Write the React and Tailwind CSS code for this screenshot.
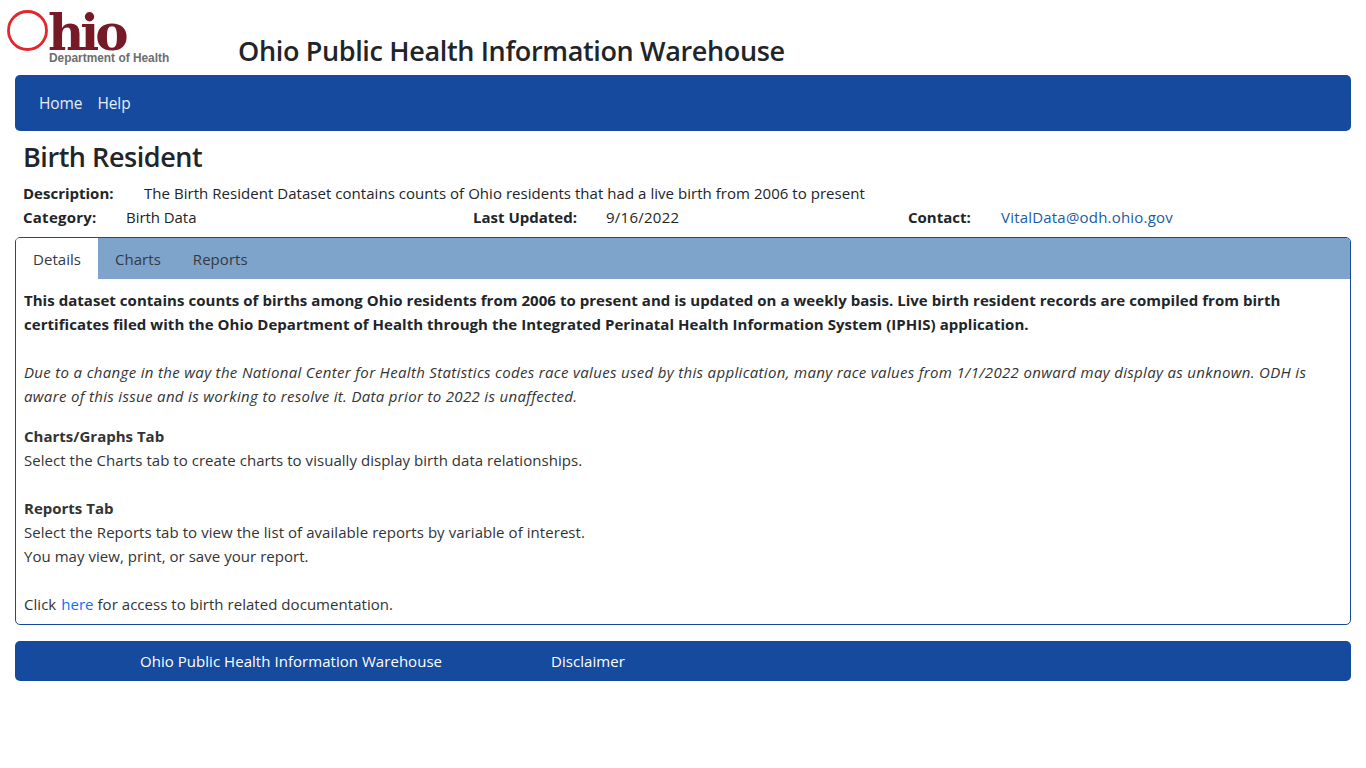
export default function App() {
  return (
    <div className="font-['Open_Sans','Noto_Sans',sans-serif] text-[15px] leading-6 tracking-[0.04px] text-[#212529] bg-white min-h-[768px]">
      <header className="h-[75px] flex items-start">
        <div className="w-[238px] shrink-0 h-[75px] pl-[7px] pt-[10px]">
          <div className="flex items-start h-[41px]">
            <svg width="41" height="41" viewBox="0 0 41 41" className="shrink-0">
              <circle cx="20.5" cy="20.5" r="19" fill="none" stroke="#e0282e" strokeWidth="2.8" />
            </svg>
            <span className="font-['DejaVu_Serif',serif] font-bold text-[50px] leading-[45px] tracking-[-4px] text-[#751a26]">hio</span>
          </div>
          <div className="pl-[42px] pt-[1px] font-['Liberation_Sans',sans-serif] font-bold text-[11.9px] leading-[13px] tracking-normal text-[#6d6e71]">Department of Health</div>
        </div>
        <h1 className="mt-[33px] text-[27px] leading-9 font-semibold tracking-[-0.35px] whitespace-nowrap">Ohio Public Health Information Warehouse</h1>
      </header>
      <nav className="mx-[15px] h-14 bg-[#154a9e] rounded-[5px] flex items-center pl-6 gap-[15px] text-[#e8edf5] text-[15.5px] tracking-[-0.1px]">
        <a>Home</a>
        <a>Help</a>
      </nav>
      <main className="mx-[15px]">
        <h2 className="pl-2 pt-2 text-[27px] leading-9 font-semibold tracking-[-0.45px]">Birth Resident</h2>
        <div className="pl-2 mt-[6px] flex">
          <b className="w-[121px] font-bold tracking-normal">Description:</b>
          <span>The Birth Resident Dataset contains counts of Ohio residents that had a live birth from 2006 to present</span>
        </div>
        <div className="pl-2 flex">
          <b className="w-[103px] font-bold tracking-[0.25px]">Category:</b>
          <span className="w-[347px] tracking-[-0.05px]">Birth Data</span>
          <b className="w-[133px] font-bold tracking-normal">Last Updated:</b>
          <span className="w-[302px] tracking-[0.25px]">9/16/2022</span>
          <b className="w-[93px] font-bold tracking-normal">Contact:</b>
          <a className="text-[#1c5aa6] tracking-[0.2px]">VitalData@odh.ohio.gov</a>
        </div>
        <section className="mt-2 border border-[#154a9e] rounded-[5px] overflow-hidden h-[388px]">
          <div className="h-[41px] bg-[#7ea4cc] flex text-[#343a40]">
            <div className="w-[82px] bg-white flex items-center justify-center text-[#343a40]">Details</div>
            <div className="ml-[17px] flex items-center">Charts</div>
            <div className="ml-[32px] flex items-center">Reports</div>
          </div>
          <div className="px-2 pt-[9px] text-[#333]">
            <p className="font-bold tracking-[0.04px] text-[#212529]">This dataset contains counts of births among Ohio residents from 2006 to present and is updated on a weekly basis. Live birth resident records are compiled from birth certificates filed with the Ohio Department of Health through the Integrated Perinatal Health Information System (IPHIS) application.</p>
            <p className="mt-6 italic tracking-[0.33px]">Due to a change in the way the National Center for Health Statistics codes race values used by this application, many race values from 1/1/2022 onward may display as unknown. ODH is aware of this issue and is working to resolve it. Data prior to 2022 is unaffected.</p>
            <p className="mt-4 font-bold tracking-normal">Charts/Graphs Tab</p>
            <p>Select the Charts tab to create charts to visually display birth data relationships.</p>
            <p className="mt-6 font-bold tracking-normal">Reports Tab</p>
            <p className="tracking-[0.06px]">Select the Reports tab to view the list of available reports by variable of interest.</p>
            <p>You may view, print, or save your report.</p>
            <p className="mt-6">Click <a className="ml-[1px] text-[#0d6efd]">here</a> for access to birth related documentation.</p>
          </div>
        </section>
        <footer className="mt-4 h-10 bg-[#154a9e] rounded-[5px] flex items-center text-white">
          <a className="ml-[125px]">Ohio Public Health Information Warehouse</a>
          <a className="ml-[109px]">Disclaimer</a>
        </footer>
      </main>
    </div>
  );
}
